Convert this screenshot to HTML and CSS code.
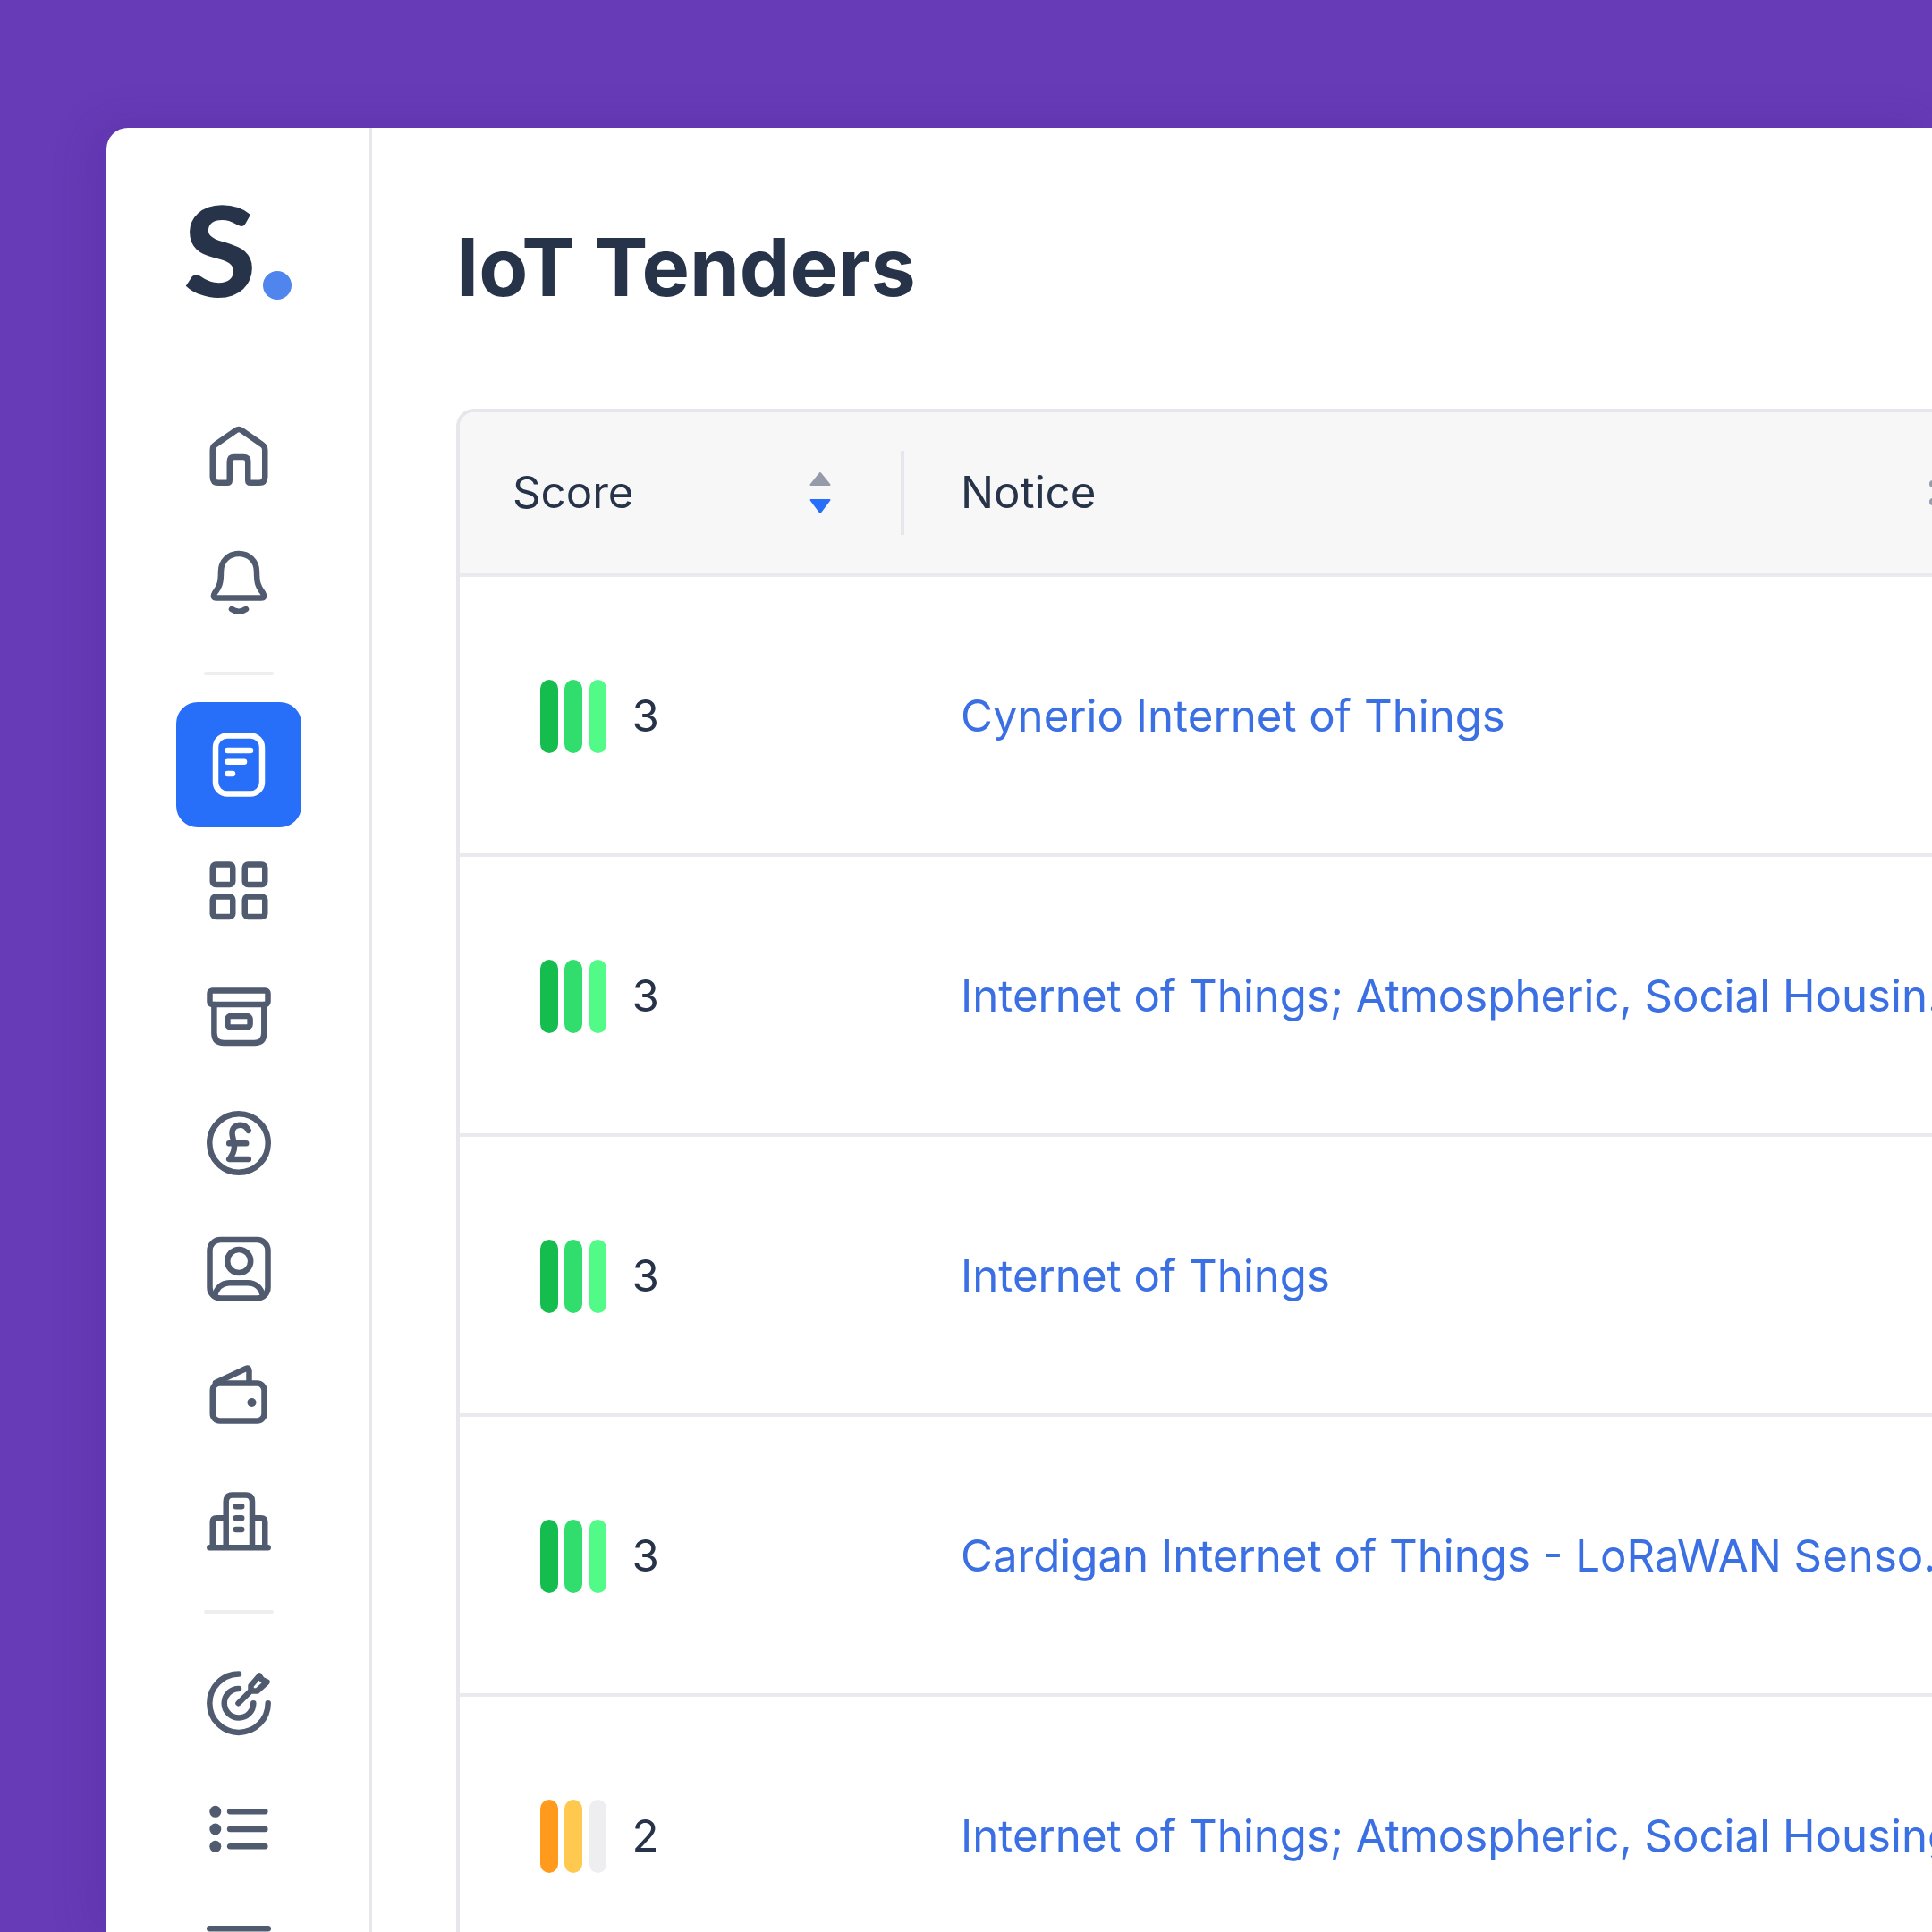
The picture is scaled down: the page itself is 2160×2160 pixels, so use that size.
FILE: index.html
```html
<!DOCTYPE html>
<html lang="en">
<head>
<meta charset="utf-8">
<title>IoT Tenders</title>
<link rel="stylesheet" href="styles.css">
</head>
<body>
<div class="window">
  <aside class="sidebar">
    <div class="logo"><span class="logo-s">S</span><span class="logo-dot"></span></div>
    <nav class="nav">
      <a class="nav-item"><svg viewBox="0 0 80 80" class="icon"><path d="M10.750 33 Q10.750 29 14 27 L37 11 Q40 9 43 11 L66 27 Q69.250 29 69.250 33 V63 Q69.250 69.750 63 69.750 H53 Q50.250 69.750 50.250 67 V46 Q50.250 41 45 41 H35 Q29.750 41 29.750 46 V67 Q29.750 69.750 27 69.750 H17 Q10.750 69.750 10.750 63 Z"/></svg></a>
      <a class="nav-item"><svg viewBox="0 0 80 80" class="icon"><path d="M20 28 C20 16 29 8 40 8 C51 8 60 16 60 28 C60 40 61 44 67 52 Q70 57.500 65 57.500 H15 Q10 57.500 13 52 C19 44 20 40 20 28 Z M32 70 Q40 75.500 48 70"/></svg></a>
      <div class="divider divider-top"></div>
      <a class="nav-item active"><svg viewBox="0 0 80 80" class="icon"><rect x="14" y="7.500" width="52" height="65" rx="13"/><path d="M27.500 24 H53 M27.500 36.700 H46 M27.500 50 H33"/></svg></a>
      <a class="nav-item"><svg viewBox="0 0 80 80" class="icon"><rect x="10.750" y="10.500" width="22.500" height="22.500" rx="3.500"/><rect x="46.750" y="10.500" width="22.500" height="22.500" rx="3.500"/><rect x="10.750" y="46.500" width="22.500" height="22.500" rx="3.500"/><rect x="46.750" y="46.500" width="22.500" height="22.500" rx="3.500"/></svg></a>
      <a class="nav-item"><svg viewBox="0 0 80 80" class="icon"><rect x="7.500" y="10.500" width="65" height="15.500" rx="3"/><path d="M12.400 26 V58 Q12.400 69 23.400 69 H57.300 Q68.300 69 68.300 58 V26"/><rect x="27.400" y="39" width="25.200" height="12.400" rx="3.500"/></svg></a>
      <a class="nav-item"><svg viewBox="0 0 80 80" class="icon"><circle cx="40" cy="40" r="32.750"/><path d="M50.800 26 C49 21.500 45 19.700 41.500 19.700 C36 19.700 32.500 23.500 32.500 29 C32.500 33 35 38 35 44 C35 50 32 54.500 29.200 58 H50.800 M29.200 40.300 H48.200"/></svg></a>
      <a class="nav-item"><svg viewBox="0 0 80 80" class="icon"><rect x="7.500" y="7" width="65" height="65.500" rx="12"/><circle cx="40.200" cy="31" r="13"/><path d="M13 70 C15 61 21 55.300 30 55.300 H50 C59 55.300 65 61 67 70"/></svg></a>
      <a class="nav-item"><svg viewBox="0 0 80 80" class="icon"><rect x="10.750" y="26.500" width="57.750" height="42" rx="8"/><path d="M14 26 L48 10 Q51.500 8.500 51.500 12.500 V26"/><circle cx="54.500" cy="48" r="5" class="filled"/></svg></a>
      <a class="nav-item"><svg viewBox="0 0 80 80" class="icon"><path d="M7.300 69.300 H72.700 M25.700 69.300 V18 Q25.700 10.500 33 10.500 H47.700 Q55 10.500 55 18 V69.300 M25.700 36.200 H15 Q10.750 36.200 10.750 40.500 V69.300 M55 36.200 H65 Q69.250 36.200 69.250 40.500 V69.300 M36.800 23.300 H43.200 M36.800 36.300 H43.200 M36.800 49 H43.200"/></svg></a>
      <div class="divider divider-low"></div>
      <a class="nav-item"><svg viewBox="0 0 80 80" class="icon"><path d="M40 7.500 A32.700 32.700 0 1 0 72.700 40.200 M40 23.900 A16.300 16.300 0 1 0 56.300 40.200 M39.500 40.200 L54.500 25.200 M53.500 26.500 V20.500 L63 9.500 L66 14 L71.500 16.500 L60.500 26.500 Z"/></svg></a>
      <a class="nav-item"><svg viewBox="0 0 80 80" class="icon"><circle cx="13.800" cy="20.300" r="6.500" class="filled"/><circle cx="13.800" cy="40" r="6.500" class="filled"/><circle cx="13.800" cy="59.300" r="6.500" class="filled"/><path d="M30 20.300 H69.300 M30 40 H69.300 M30 59.300 H69.300"/></svg></a>
      <a class="nav-item"><svg viewBox="0 0 80 80" class="icon"><path d="M7.300 10.250 H72.700"/></svg></a>
    </nav>
  </aside>
  <main class="content">
    <h1 class="title">IoT Tenders</h1>
    <section class="table">
      <header class="row head">
        <div class="cell-score">
          <span class="head-label">Score</span>
          <svg class="sort" viewBox="0 0 24 48"><path class="up" d="M12 2 L22.500 15 H1.500 Z"/><path class="down" d="M1.500 32 H22.500 L12 46 Z"/></svg>
        </div>
        <div class="cell-notice head-notice">Notice</div>
        <span class="more"><i></i><i></i></span>
      </header>
      <div class="row"><div class="cell-score"><span class="bars"><i class="g1"></i><i class="g2"></i><i class="g3"></i></span><span class="num">3</span></div><a class="cell-notice link">Cynerio Internet of Things</a></div>
      <div class="row"><div class="cell-score"><span class="bars"><i class="g1"></i><i class="g2"></i><i class="g3"></i></span><span class="num">3</span></div><a class="cell-notice link">Internet of Things; Atmospheric, Social Housin...</a></div>
      <div class="row"><div class="cell-score"><span class="bars"><i class="g1"></i><i class="g2"></i><i class="g3"></i></span><span class="num">3</span></div><a class="cell-notice link">Internet of Things</a></div>
      <div class="row"><div class="cell-score"><span class="bars"><i class="g1"></i><i class="g2"></i><i class="g3"></i></span><span class="num">3</span></div><a class="cell-notice link">Cardigan Internet of Things - LoRaWAN Senso...</a></div>
      <div class="row"><div class="cell-score"><span class="bars"><i class="o1"></i><i class="o2"></i><i class="o3"></i></span><span class="num">2</span></div><a class="cell-notice link">Internet of Things; Atmospheric, Social Housing</a></div>
    </section>
  </main>
</div>
</body>
</html>
```
FILE: styles.css
```css
* { box-sizing: border-box; }
html, body { margin: 0; height: 2160px; overflow: hidden; }
body { background: #673ab7; padding: 143px 0 0 119px; font-family: Inter, "Noto Sans", sans-serif; color: #263349; }
.window { display: flex; width: 2041px; height: 2017px; background: #fff; border-radius: 24px 0 0 0; box-shadow: -12px 0 50px rgba(60, 30, 120, .18); overflow: hidden; }
.sidebar { width: 297px; flex: none; border-right: 4px solid #e6e6ec; display: flex; flex-direction: column; align-items: center; padding: 90px 0 0 3px; }
.logo { width: 118px; height: 102px; display: flex; justify-content: space-between; align-items: flex-end; flex: none; }
.logo-s { height: 102px; margin-left: -3px; font: 900 140px/90px Lato, sans-serif; color: #263349; transform: scaleX(1.06); transform-origin: 0 50%; }
.logo-dot { width: 32px; height: 32px; border-radius: 50%; background: #5085ee; }
.nav { display: flex; flex-direction: column; align-items: center; margin-top: 105px; }
.nav-item { width: 140px; height: 140px; flex: none; margin-bottom: 1px; display: flex; align-items: center; justify-content: center; border-radius: 24px; }
.icon { width: 80px; height: 80px; fill: none; stroke: #505b70; stroke-width: 6.5; stroke-linecap: round; stroke-linejoin: round; }
.icon .filled { fill: #505b70; stroke: none; }
.active { background: #276ef9; }
.active .icon { stroke: #fff; }
.divider { width: 78px; height: 4px; flex: none; border-radius: 2px; background: #eeeef1; }
.divider-top { margin: 29px 0 30px; }
.divider-low { margin: 28px 0 30px; }
.content { flex: 1; padding-left: 94px; }
.title { margin: 102px 0 0; font-size: 89.8px; line-height: 108px; font-weight: 700; color: #263349; }
.table { margin-top: 104px; border: solid #e6e6ec; border-width: 4px 0 0 4px; border-radius: 20px 0 0 0; width: 1700px; overflow: hidden; }
.row { display: flex; align-items: center; height: 313px; border-bottom: 4px solid #e9e9ee; font-size: 49.2px; }
.head { height: 184px; background: #f7f7f7; }
.cell-score { width: 497px; flex: none; padding-left: 60px; display: flex; align-items: center; }
.head .cell-score { justify-content: space-between; height: 94px; border-right: 4px solid #e6e6ec; padding-left: 59px; padding-right: 78px; }
.head-label { margin-bottom: 2px; }
.cell-notice { width: 1146px; flex: none; padding-left: 63px; white-space: nowrap; }
.head-notice { padding-bottom: 2px; }
.link { color: #3b6fe4; }
.sort { width: 24px; height: 48px; stroke-width: 2; stroke-linejoin: round; }
.up { fill: #959ba8; stroke: #959ba8; }
.down { fill: #276ef9; stroke: #276ef9; }
.more { display: flex; flex-direction: column; gap: 12px; flex: none; }
.more i { width: 8px; height: 8px; border-radius: 50%; background: #959ba8; display: block; }
.bars { display: flex; gap: 7.8px; margin: 3px 28px 0 30px; }
.bars i { display: block; width: 19.6px; height: 82px; border-radius: 10px; }
.g1 { background: #15bd4f; }
.g2 { background: #31dd6d; }
.g3 { background: #52fb87; }
.o1 { background: #ff9a1c; }
.o2 { background: #ffc84f; }
.o3 { background: #eeeef1; }
```
